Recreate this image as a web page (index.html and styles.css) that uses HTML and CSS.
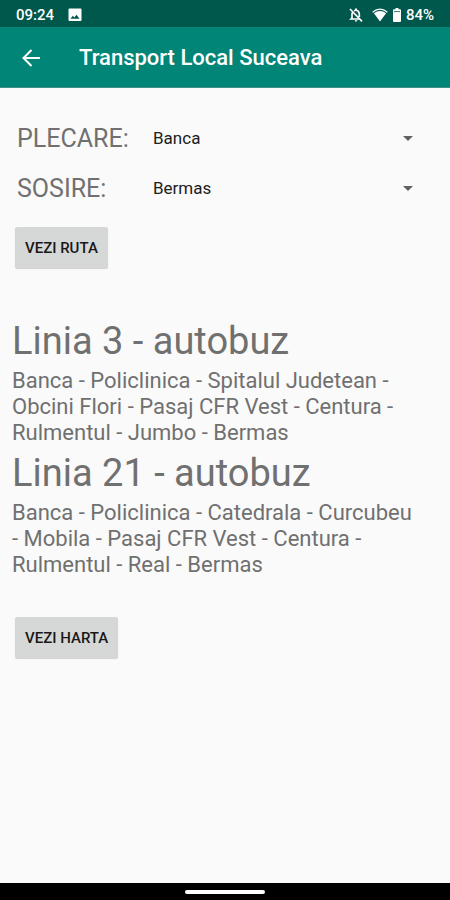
FILE: index.html
```html
<!DOCTYPE html>
<html lang="ro">
<head>
<meta charset="utf-8">
<meta name="viewport" content="width=device-width, initial-scale=1">
<title>Transport Local Suceava</title>
<link rel="stylesheet" href="styles.css">
</head>
<body>
<div class="status">
  <span class="status-group status-left">
    <span>09:24</span>
    <svg class="icon-image" viewBox="0 0 14 14" aria-hidden="true"><path fill="currentColor" fill-rule="evenodd" d="M1.5 0.500h11q1 0 1 1v10.500q0 1-1 1h-11q-1 0-1-1v-10.500q0-1 1-1zM2.500 10.800h9l-3-4-2.200 2.800-1.500-1.800z"/></svg>
  </span>
  <span class="status-group status-right">
    <svg class="icon-bell" viewBox="0 0 24 24" aria-hidden="true"><path fill="none" stroke="currentColor" stroke-width="2.500" d="M3 3l18 18.500M7 8c-.7 1-1 2-1 3.500v5L4.500 18H17M9 5.500C14 3.500 17 7 17 11v4"/><path fill="currentColor" d="M10.500 5V3.500a1.500 1.500 0 0 1 3 0V5zM10 20h4a2 2 0 0 1-4 0z"/></svg>
    <svg class="icon-wifi" viewBox="0 0 16 14" aria-hidden="true"><path fill="currentColor" d="M1.900 5.300Q8 .8 14.100 5.300L8 13.500z"/><path fill="none" stroke="currentColor" stroke-width="1.300" d="M.6 4.200Q8-1.800 15.400 4.200"/></svg>
    <svg class="icon-battery" viewBox="0 0 8 14" aria-hidden="true"><path fill="currentColor" d="M2.500 0h3v1.300H7q1 0 1 1V13q0 1-1 1H1q-1 0-1-1V2.300q0-1 1-1h1.500z"/><path stroke="#00574b" stroke-width=".8" d="M1 3.600h6"/></svg>
    <span>84%</span>
  </span>
</div>
<header class="appbar">
  <button class="back" type="button" aria-label="Înapoi">
    <svg viewBox="0 0 20 20" aria-hidden="true"><path fill="none" stroke="currentColor" stroke-width="2" d="M19 10H3M10.500 2L2.500 10l8 8"/></svg>
  </button>
  <h1>Transport Local Suceava</h1>
</header>
<main>
  <form class="search">
    <div class="field">
      <label for="from">PLECARE:</label>
      <select id="from"><option>Banca</option><option>Bermas</option></select>
    </div>
    <div class="field">
      <label for="to">SOSIRE:</label>
      <select id="to"><option>Bermas</option><option>Banca</option></select>
    </div>
    <button class="action" type="button">VEZI RUTA</button>
  </form>
  <section class="routes">
    <h2>Linia 3 - autobuz</h2>
    <p>Banca - Policlinica - Spitalul Judetean - Obcini Flori - Pasaj CFR Vest - Centura - Rulmentul - Jumbo - Bermas</p>
    <h2>Linia 21 - autobuz</h2>
    <p>Banca - Policlinica - Catedrala - Curcubeu - Mobila - Pasaj CFR Vest - Centura - Rulmentul - Real - Bermas</p>
  </section>
  <button class="action" type="button">VEZI HARTA</button>
</main>
<div class="navbar"><span class="handle"></span></div>
</body>
</html>
```
FILE: styles.css
```css
* { box-sizing: border-box; }

body {
  margin: 0;
  min-height: 100vh;
  display: flex;
  flex-direction: column;
  background: #fafafa;
  color: #707070;
  font-family: Roboto, "Noto Sans", sans-serif;
}

h1, h2, p { margin: 0; }
svg { display: block; }

.status {
  display: flex;
  justify-content: space-between;
  align-items: center;
  height: 27px;
  padding: 2px 16px 0;
  background: #00574b;
  color: #fff;
  font-size: 15px;
  font-weight: 500;
}

.status-group { display: flex; align-items: center; }
.status-left { gap: 14px; }
.status-right { gap: 5px; }
.icon-image { width: 14px; height: 14px; }
.icon-bell { width: 16px; height: 16px; margin-right: 3px; }
.icon-wifi { width: 16px; height: 14px; }
.icon-battery { width: 8px; height: 14px; }

.appbar {
  display: flex;
  align-items: center;
  gap: 36px;
  height: 61px;
  padding: 2px 20px 0 19px;
  background: #008577;
  color: #fff;
  border-bottom: 1px solid #3d9388;
}

.back {
  padding: 2px;
  border: 0;
  background: none;
  color: inherit;
}
.back svg { width: 20px; height: 20px; }

h1 {
  font-size: 22px;
  font-weight: 500;
  line-height: 28px;
}

main {
  flex: 1;
  padding: 25px 36px 24px 12px;
}

.field {
  display: flex;
  align-items: center;
  height: 50px;
  padding-left: 5px;
}

.field label {
  width: 136px;
  font-size: 25px;
  font-weight: 400;
  color: #707070;
}

.field select {
  flex: 1;
  height: 32px;
  padding: 0;
  border: 0;
  appearance: none;
  background: url("data:image/svg+xml,%3Csvg xmlns='http://www.w3.org/2000/svg' viewBox='0 0 10 5'%3E%3Cpath fill='%23606060' d='M0 0h10L5 5z'/%3E%3C/svg%3E") no-repeat right 1px center / 10px 5px;
  color: #202020;
  font: 400 17px/24px Roboto, "Noto Sans", sans-serif;
}

.action {
  display: block;
  height: 41px;
  margin: 0 3px;
  padding: 0 10px;
  border: 0;
  border-radius: 2px;
  background: #d6d7d7;
  box-shadow: 0 1px 1px #d0d0d0;
  color: #181818;
  font: 500 15px/20px Roboto, "Noto Sans", sans-serif;
}

.search .action { margin-top: 14px; }

.routes { padding: 46px 0 39px; }

h2 {
  font-size: 38px;
  font-weight: 400;
  line-height: 54px;
}

.routes p {
  font-size: 22px;
  line-height: 26px;
}

.navbar {
  display: flex;
  justify-content: center;
  align-items: center;
  height: 17px;
  background: #000;
}

.handle {
  width: 80px;
  height: 4px;
  border-radius: 2px;
  background: #fff;
}
```
